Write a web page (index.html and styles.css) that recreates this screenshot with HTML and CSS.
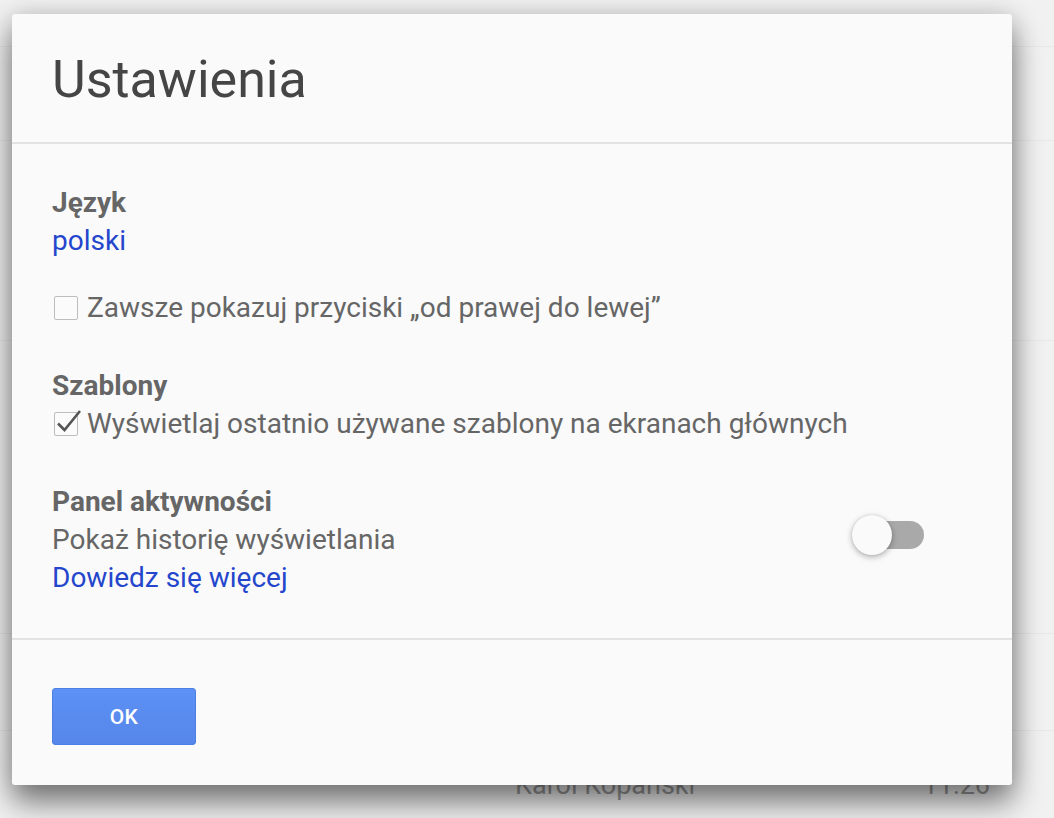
FILE: index.html
```html
<!DOCTYPE html>
<html lang="pl">
<head>
<meta charset="utf-8">
<title>Ustawienia</title>
<link rel="stylesheet" href="styles.css">
</head>
<body>
<div class="backdrop">
  <div class="bg-row bg-row-1"></div>
  <div class="bg-row bg-row-2"></div>
  <div class="bg-row bg-row-3"></div>
  <div class="bg-row bg-row-4"></div>
  <div class="bg-row bg-row-5"></div>
  <div class="bg-row bg-row-6">
    <span class="bg-name">Karol Kopański</span>
    <span class="bg-time">11:26</span>
  </div>
</div>

<div class="dialog" role="dialog" aria-labelledby="dlg-title">
  <div class="dialog-header">
    <h1 id="dlg-title" class="dialog-title">Ustawienia</h1>
  </div>

  <div class="dialog-body">
    <section class="section">
      <div class="label">Język</div>
      <a class="link" href="#">polski</a>
      <label class="check-row check-row-rtl">
        <span class="checkbox"></span>
        <span class="text">Zawsze pokazuj przyciski „od prawej do lewej”</span>
      </label>
    </section>

    <section class="section">
      <div class="label">Szablony</div>
      <label class="check-row">
        <span class="checkbox checked">
          <svg class="checkmark" viewBox="0 0 28 28" width="28" height="28">
            <path d="M4 15.5 L10.5 22 L26 3" fill="none" stroke="#555" stroke-width="2.6" stroke-linecap="butt" stroke-linejoin="miter"/>
          </svg>
        </span>
        <span class="text">Wyświetlaj ostatnio używane szablony na ekranach głównych</span>
      </label>
    </section>

    <section class="section section-activity">
      <div class="activity-text">
        <div class="label">Panel aktywności</div>
        <div class="text">Pokaż historię wyświetlania</div>
        <a class="link" href="#">Dowiedz się więcej</a>
      </div>
      <div class="switch">
        <span class="switch-track"></span>
        <span class="switch-thumb"></span>
      </div>
    </section>
  </div>

  <div class="dialog-footer">
    <button class="btn-ok" type="button">OK</button>
  </div>
</div>
</body>
</html>
```

FILE: styles.css
```css
html, body {
  margin: 0;
  padding: 0;
}

body {
  width: 1054px;
  height: 818px;
  overflow: hidden;
  background: #f1f1f1;
  font-family: Roboto, "Noto Sans", "Liberation Sans", sans-serif;
  position: relative;
}

/* faded page behind the dialog */
.backdrop {
  display: flex;
  flex-direction: column;
}

.bg-row {
  border-bottom: 1px solid #e8e8e8;
}

.bg-row-1 { height: 46px; }
.bg-row-2 { height: 93px; }
.bg-row-3 { height: 199px; }
.bg-row-4 { height: 292px; }
.bg-row-5 { height: 96px; }
.bg-row-6 {
  height: 80px;
  border-bottom: none;
  display: flex;
  align-items: flex-start;
  padding-top: 38px;
  font-size: 27px;
  line-height: 32px;
  color: #9a9a9a;
}

.bg-name {
  margin-left: 515px;
}

.bg-time {
  margin-left: auto;
  margin-right: 64px;
}

/* dialog */
.dialog {
  position: absolute;
  top: 14px;
  left: 12px;
  width: 1000px;
  background: #fafafa;
  border-radius: 3px;
  box-shadow: 0 18px 30px rgba(0, 0, 0, 0.48), 0 0 26px rgba(0, 0, 0, 0.16);
}

.dialog-header {
  padding: 37px 40px 33px;
  border-bottom: 2px solid #e2e2e2;
}

.dialog-title {
  margin: 0;
  font-size: 52px;
  line-height: 58px;
  font-weight: 400;
  color: #454545;
}

.dialog-body {
  padding: 40px 88px 41px 40px;
  display: flex;
  flex-direction: column;
  gap: 40px;
  border-bottom: 2px solid #e2e2e2;
  font-size: 28px;
  line-height: 38px;
  color: #666;
}

.section {
  display: flex;
  flex-direction: column;
  align-items: flex-start;
}

.label {
  font-weight: 700;
  color: #666;
}

.link {
  color: #2446cc;
  text-decoration: none;
}

.text {
  color: #666;
}

.check-row {
  display: flex;
  align-items: center;
  gap: 9px;
}

.check-row-rtl {
  margin-top: 29px;
}

.checkbox {
  position: relative;
  width: 22px;
  height: 22px;
  margin-left: 2px;
  border: 1.5px solid #bdbdbd;
  border-radius: 2px;
  background: #fbfbfb;
  flex: none;
}

.checkmark {
  position: absolute;
  left: -1px;
  top: -5px;
}

.section-activity {
  flex-direction: row;
  align-items: center;
  justify-content: space-between;
}

.switch {
  position: relative;
  width: 72px;
  height: 40px;
  margin-top: -10px;
}

.switch-track {
  position: absolute;
  right: 0;
  top: 6px;
  width: 66px;
  height: 28px;
  border-radius: 14px;
  background: #a9a9a9;
}

.switch-thumb {
  position: absolute;
  left: 0;
  top: 0;
  width: 40px;
  height: 40px;
  border-radius: 50%;
  background: #fafafa;
  box-shadow: 0 2px 6px rgba(0, 0, 0, 0.3), 0 0 2px rgba(0, 0, 0, 0.12);
}

.dialog-footer {
  padding: 48px 40px 40px;
}

.btn-ok {
  width: 144px;
  height: 57px;
  border: 1px solid #4a7fe5;
  border-radius: 3px;
  background: linear-gradient(#5d91f5, #5686e9);
  color: #fff;
  font-family: Roboto, "Noto Sans", sans-serif;
  font-size: 21px;
  font-weight: 500;
  letter-spacing: 0.3px;
  padding: 0;
}
```
